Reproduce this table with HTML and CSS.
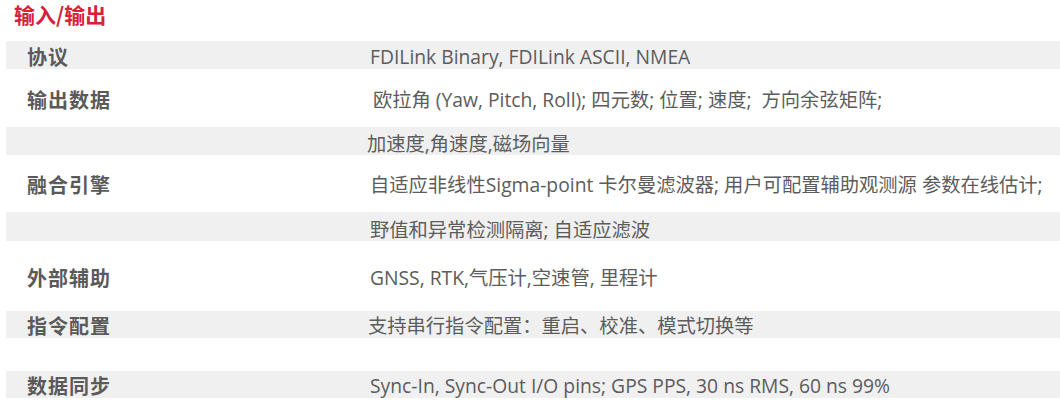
FILE: index.html
```html
<!DOCTYPE html>
<html lang="zh-CN">
<head>
<meta charset="utf-8">
<title>输入/输出</title>
<link rel="stylesheet" href="styles.css">
</head>
<body>
<h2 class="title">输入/输出</h2>
<div class="spec">
  <div class="row gray h28"><div class="label">协议</div><div class="value">FDILink Binary, FDILink ASCII, NMEA</div></div>
  <div class="row h58"><div class="label">输出数据</div><div class="value shift-r">欧拉角 (Yaw, Pitch, Roll); 四元数; 位置; 速度;&nbsp; 方向余弦矩阵;</div></div>
  <div class="row gray h28 low"><div class="label"></div><div class="value shift-l">加速度,角速度,磁场向量</div></div>
  <div class="row h57"><div class="label">融合引擎</div><div class="value">自适应非线性Sigma-point 卡尔曼滤波器; 用户可配置辅助观测源 参数在线估计;</div></div>
  <div class="row gray h29 low"><div class="label"></div><div class="value">野值和异常检测隔离; 自适应滤波</div></div>
  <div class="row h70"><div class="label">外部辅助</div><div class="value">GNSS, RTK,气压计,空速管, 里程计</div></div>
  <div class="row gray h27"><div class="label">指令配置</div><div class="value shift-l1">支持串行指令配置：重启、校准、模式切换等</div></div>
  <div class="row h33"></div>
  <div class="row gray h27"><div class="label">数据同步</div><div class="value">Sync-In, Sync-Out I/O pins; GPS PPS, 30 ns RMS, 60 ns 99%</div></div>
</div>
</body>
</html>
```
FILE: styles.css
```css
html, body {
  margin: 0;
  padding: 0;
  background: #ffffff;
}

body {
  width: 1060px;
  height: 410px;
  overflow: hidden;
  font-family: "Open Sans", "Noto Sans CJK SC", sans-serif;
}

.title {
  margin: 0;
  padding: 1px 0 0 14px;
  height: 41px;
  box-sizing: border-box;
  font-family: "Noto Sans CJK SC", sans-serif;
  font-size: 21px;
  font-weight: 700;
  line-height: 26px;
  color: #d8203a;
}

.spec {
  margin-left: 6px;
  display: flex;
  flex-direction: column;
}

.row {
  display: grid;
  grid-template-columns: 364px 1fr;
  align-items: center;
  padding-top: 3px;
  box-sizing: border-box;
}

.row.low {
  padding-top: 6px;
}

.gray {
  background: #f0f0f0;
}

.h27 { height: 27px; }
.h28 { height: 28px; }
.h29 { height: 29px; }
.h33 { height: 33px; }
.h57 { height: 57px; }
.h58 { height: 58px; }
.h70 { height: 70px; }

.label {
  padding-left: 21px;
  font-family: "Noto Sans CJK SC", sans-serif;
  font-size: 20px;
  font-weight: 700;
  letter-spacing: 1px;
  color: #5a5a5a;
  line-height: 22px;
}

.value {
  font-size: 19.3px;
  color: #5c5c5c;
  line-height: 22px;
  white-space: nowrap;
}

.shift-r { padding-left: 3px; }
.shift-l { margin-left: -3px; }
.shift-l1 { margin-left: -2px; }
```
